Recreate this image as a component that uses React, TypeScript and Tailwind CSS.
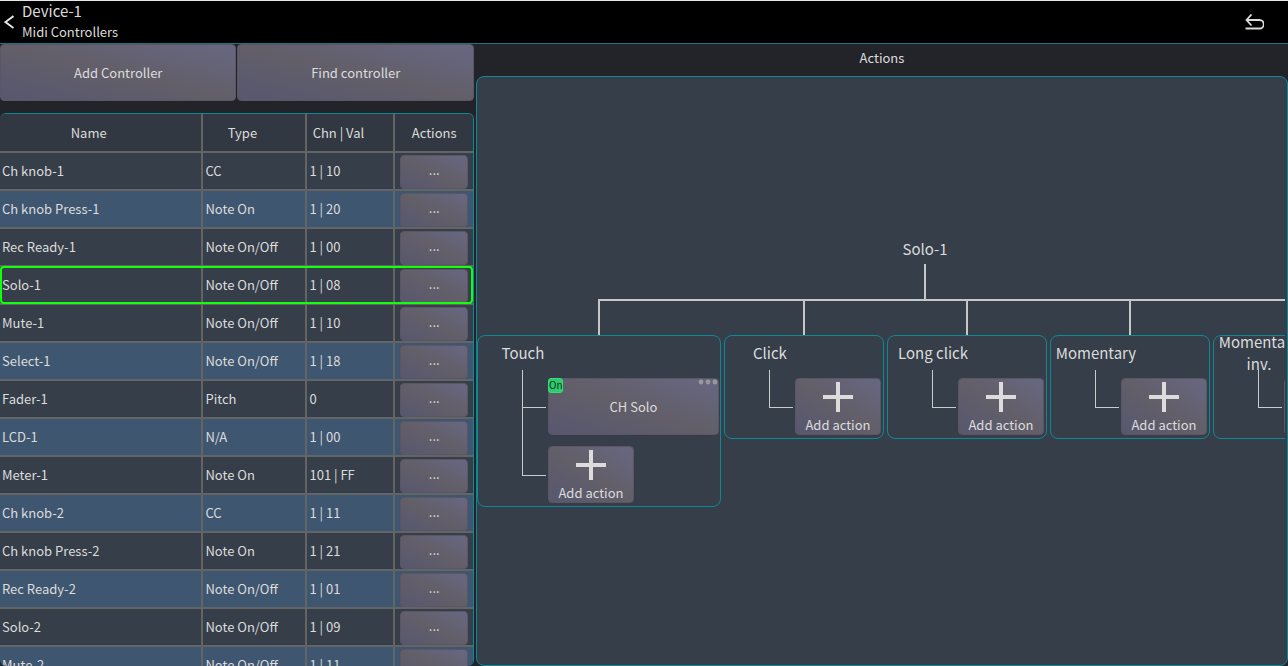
import { useState } from "react";

type Controller = { name: string; type: string; value: string };

const controllers: Controller[] = [
  { name: "Ch knob-1", type: "CC", value: "1 | 10" },
  { name: "Ch knob Press-1", type: "Note On", value: "1 | 20" },
  { name: "Rec Ready-1", type: "Note On/Off", value: "1 | 00" },
  { name: "Solo-1", type: "Note On/Off", value: "1 | 08" },
  { name: "Mute-1", type: "Note On/Off", value: "1 | 10" },
  { name: "Select-1", type: "Note On/Off", value: "1 | 18" },
  { name: "Fader-1", type: "Pitch", value: "0" },
  { name: "LCD-1", type: "N/A", value: "1 | 00" },
  { name: "Meter-1", type: "Note On", value: "101 | FF" },
  { name: "Ch knob-2", type: "CC", value: "1 | 11" },
  { name: "Ch knob Press-2", type: "Note On", value: "1 | 21" },
  { name: "Rec Ready-2", type: "Note On/Off", value: "1 | 01" },
  { name: "Solo-2", type: "Note On/Off", value: "1 | 09" },
  { name: "Mute-2", type: "Note On/Off", value: "1 | 11" },
];

type Trigger = { label: string; actions: string[] };

const triggers: Trigger[] = [
  { label: "Touch", actions: ["CH Solo"] },
  { label: "Click", actions: [] },
  { label: "Long click", actions: [] },
  { label: "Momentary", actions: [] },
  { label: "Momentary inv.", actions: [] },
];

const raised =
  "rounded-sm border border-[#5b5564] bg-[linear-gradient(to_top_right,#57576f,#625f69_50%,#676782)]";

function Branch({ first, last }: { first: boolean; last: boolean }) {
  return (
    <div className="w-[70px] shrink-0 pl-11">
      <div className={`w-6 border-b border-l border-[#c9cbcc] ${first ? "h-[38px]" : "h-[41px]"}`} />
      {!last && <div className="h-[27px] w-6 border-l border-[#c9cbcc]" />}
    </div>
  );
}

function ActionButton({ label }: { label: string }) {
  return (
    <button className={`relative h-[57px] w-[171px] ${raised}`}>
      {label}
      <span className="absolute -top-px -left-px h-[15px] w-[15px] rounded-[3px] border border-[#35e07c] bg-[#2ccb6c] text-center text-[10px] leading-3 text-[#10301f]">
        On
      </span>
      <svg className="absolute top-0 right-0" width="20" height="6" fill="#999999" aria-hidden="true">
        <circle cx="3" cy="3" r="2.4" />
        <circle cx="10" cy="3" r="2.4" />
        <circle cx="17" cy="3" r="2.4" />
      </svg>
    </button>
  );
}

function AddActionButton() {
  return (
    <button className={`flex h-[57px] w-[86px] flex-col items-center justify-between pt-[3px] ${raised}`}>
      <svg width="30" height="30" fill="#dcdcdc" aria-hidden="true">
        <path d="M13 0h4v13h13v4H17v13h-4V17H0v-4h13z" />
      </svg>
      <span className="leading-[19px]">Add action</span>
    </button>
  );
}

function TriggerCard({ trigger }: { trigger: Trigger }) {
  const hasActions = trigger.actions.length > 0;
  return (
    <section className="min-w-40 rounded-lg border border-[#0e8996] pr-px pb-[3px]">
      <h3 className="flex h-[34px] w-[90px] items-center justify-center text-center text-[15px] leading-[22px]">
        {trigger.label}
      </h3>
      {trigger.actions.map((action, i) => (
        <div key={action} className="flex items-end">
          <Branch first={i === 0} last={false} />
          <ActionButton label={action} />
        </div>
      ))}
      <div className="flex">
        <Branch first={!hasActions} last />
        <div className={hasActions ? "pt-[11px]" : "pt-2"}>
          <AddActionButton />
        </div>
      </div>
    </section>
  );
}

export default function App() {
  const [selected, setSelected] = useState("Solo-1");
  return (
    <div className="flex h-screen flex-col overflow-hidden bg-[#232429] font-['Noto_Sans_CJK_SC','Noto_Sans',sans-serif] text-[13px] text-[#dcdcdc]">
      <header className="flex h-11 shrink-0 items-center justify-between border-t border-b border-t-[#e8e6e3] border-b-[#127482] bg-black">
        <div className="flex items-center gap-2">
          <button aria-label="Back" className="pl-1">
            <svg width="10" height="14" fill="none" stroke="#e4e4e4" strokeWidth="2" aria-hidden="true">
              <path d="M9.500 1 1.500 7l8 6" />
            </svg>
          </button>
          <div className="pb-px">
            <h1 className="text-[15px] leading-5">Device-1</h1>
            <p className="leading-[21px]">Midi Controllers</p>
          </div>
        </div>
        <button aria-label="Undo" className="mr-6">
          <svg width="19" height="16" fill="none" stroke="#dcdcdc" strokeWidth="1.8" aria-hidden="true">
            <path d="M6.500 .5 1.500 6l5 5.500M1.500 6h13a4 4 0 0 1 0 8.500H.5" />
          </svg>
        </button>
      </header>

      <main className="flex min-h-0 flex-1 gap-0.5">
        <div className="flex w-[36.8%] shrink-0 flex-col">
          <div className="flex shrink-0 gap-px">
            <button className={`h-[57px] flex-1 ${raised}`}>Add Controller</button>
            <button className={`h-[57px] flex-1 ${raised}`}>Find controller</button>
          </div>
          <div className="mt-3 min-h-0 flex-1 overflow-auto rounded-md border-t border-r border-[#0e8996] [scrollbar-width:none]">
            <table className="w-full table-fixed border-collapse bg-[#353e49]">
              <colgroup>
                <col className="w-[42.8%]" />
                <col className="w-[22%]" />
                <col className="w-[18.6%]" />
                <col />
              </colgroup>
              <thead>
                <tr className="h-[38px] bg-[#313841]">
                  {["Name", "Type", "Chn | Val"].map((title) => (
                    <th key={title} className="border-r-2 border-b-2 border-[#626466] p-0 pr-6 font-normal">
                      {title}
                    </th>
                  ))}
                  <th className="border-b-2 border-[#626466] p-0 font-normal">Actions</th>
                </tr>
              </thead>
              <tbody>
                {controllers.map((c, i) => {
                  const active = c.name === selected;
                  return (
                    <tr
                      key={c.name}
                      onClick={() => setSelected(c.name)}
                      className={`h-[38px] ${
                        active
                          ? "rounded-sm outline-2 -outline-offset-2 outline-[#14ff0a]"
                          : i % 2 === 1
                            ? "bg-[#3f5670]"
                            : ""
                      }`}
                    >
                      {[c.name, c.type, c.value].map((text, n) => (
                        <td key={n} className="border-r-2 border-b-2 border-[#626466] py-0 pr-0 pl-0.5">
                          {text}
                        </td>
                      ))}
                      <td className="border-b-2 border-[#626466] p-0 pt-0.5 text-center">
                        <button
                          aria-label={`Actions for ${c.name}`}
                          className={`mx-auto block h-[34px] w-[68px] pb-1 ${raised}`}
                        >
                          ...
                        </button>
                      </td>
                    </tr>
                  );
                })}
              </tbody>
            </table>
          </div>
        </div>

        <div className="flex min-w-0 flex-1 flex-col">
          <h2 className="h-8 shrink-0 text-center leading-7">Actions</h2>
          <div className="flex min-h-0 flex-1 flex-col justify-center rounded-lg border border-[#0e8996] bg-[#353e49] pr-0.5">
            <div className="overflow-auto [scrollbar-width:none]">
              <div className="flex w-max flex-col">
                <div className="flex flex-col items-center">
                  <h2 className="h-[29px] text-[15px] leading-7">Solo-1</h2>
                  <div className="h-[35px] w-0.5 bg-[#c4c6c8]" />
                </div>
                <div className="mr-[79px] ml-[121px] h-0.5 bg-[#c4c6c8]" />
                <div className="flex items-start gap-[3px]">
                  {triggers.map((t) => (
                    <div key={t.label}>
                      <div className="mx-auto h-[34px] w-0.5 bg-[#c4c6c8]" />
                      <TriggerCard trigger={t} />
                    </div>
                  ))}
                </div>
              </div>
            </div>
          </div>
        </div>
      </main>
    </div>
  );
}
